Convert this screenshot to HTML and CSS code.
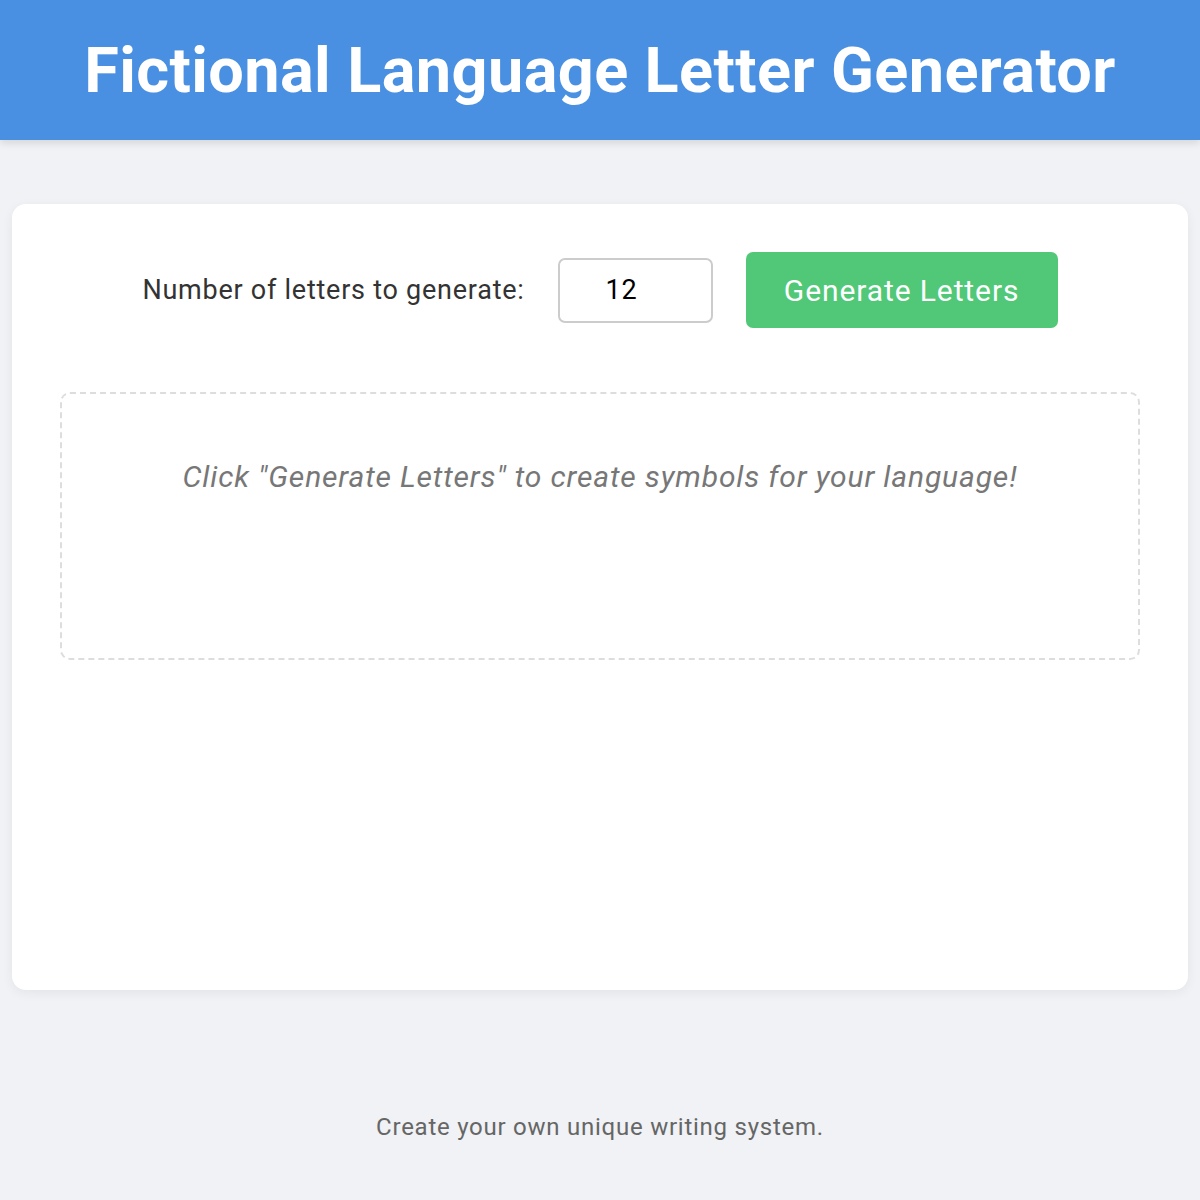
FILE: index.html
```html
<!DOCTYPE html>
<html lang="en">
<head>
  <meta charset="UTF-8">
  <meta name="viewport" content="width=device-width, initial-scale=1.0">
  <link rel="stylesheet" href="styles.css">
  <title>Fictional Language Letter Generator</title>
</head>
<body>

  <header class="top_bar">
    <h1 class="title">Fictional Language Letter Generator</h1>
  </header>

  <main class="wrap">
    <section class="card">
      <div class="controls">
        <label for="letter_count" class="count_label">Number of letters to generate:</label>
        <input type="number" id="letter_count" class="count_input" value="12" min="1" max="50">
        <button class="gen_btn">Generate Letters</button>
      </div>

      <div class="letters_box">
        <p class="placeholder">Click "Generate Letters" to create symbols for your language!</p>
      </div>
    </section>
  </main>

  <footer class="foot">
    <p>Create your own unique writing system.</p>
  </footer>

</body>
</html>
```

FILE: styles.css
```css
body,h1,p{
  margin:0px; padding:0px;
}

body{
  background:#f0f2f5; font-family:Roboto, "Noto Sans", sans-serif; color:#333;
}

.top_bar{
  height:140px; background:#4a90e2; box-shadow:0px 3px 8px rgba(0,0,0,0.12);
  display:flex; align-items:center; justify-content:center;
}

.title{
  color:#fff; font-size:63px; font-weight:700; letter-spacing:0.4px;
}

.wrap{
  padding:64px 12px 0px;
}

.card{
  height:786px; box-sizing:border-box; background:#fff; border-radius:14px;
  box-shadow:0px 3px 12px rgba(0,0,0,0.06); padding:48px 48px 0px;
}

.controls{
  display:flex; align-items:center; justify-content:center;
}

.count_label{
  font-size:27px; letter-spacing:0.75px; color:#333; margin-right:33px;
}

.count_input{
  width:155px; height:65px; box-sizing:border-box; border:2px solid #ccc; border-radius:7px;
  font-family:Roboto, sans-serif; font-size:27px; letter-spacing:0.75px; color:#000; padding:0px 0px 0px 46px;
  -moz-appearance:textfield; margin-right:33px;
}

.count_input::-webkit-inner-spin-button,
.count_input::-webkit-outer-spin-button{
  -webkit-appearance:none; margin:0px;
}

.gen_btn{
  width:312px; height:76px; border:none; border-radius:7px; background:#50c878; color:#fff;
  font-family:Roboto, sans-serif; font-size:30px; letter-spacing:0.9px; cursor:pointer;
}

.letters_box{
  margin-top:64px; height:268px; box-sizing:border-box; border:2px dashed #ddd; border-radius:10px;
  padding-top:65px; text-align:center;
}

.placeholder{
  font-size:30px; font-style:italic; letter-spacing:0.85px; color:#777;
}

.foot{
  text-align:center; padding-top:123px; font-size:24px; letter-spacing:0.75px; color:#666;
}
```
